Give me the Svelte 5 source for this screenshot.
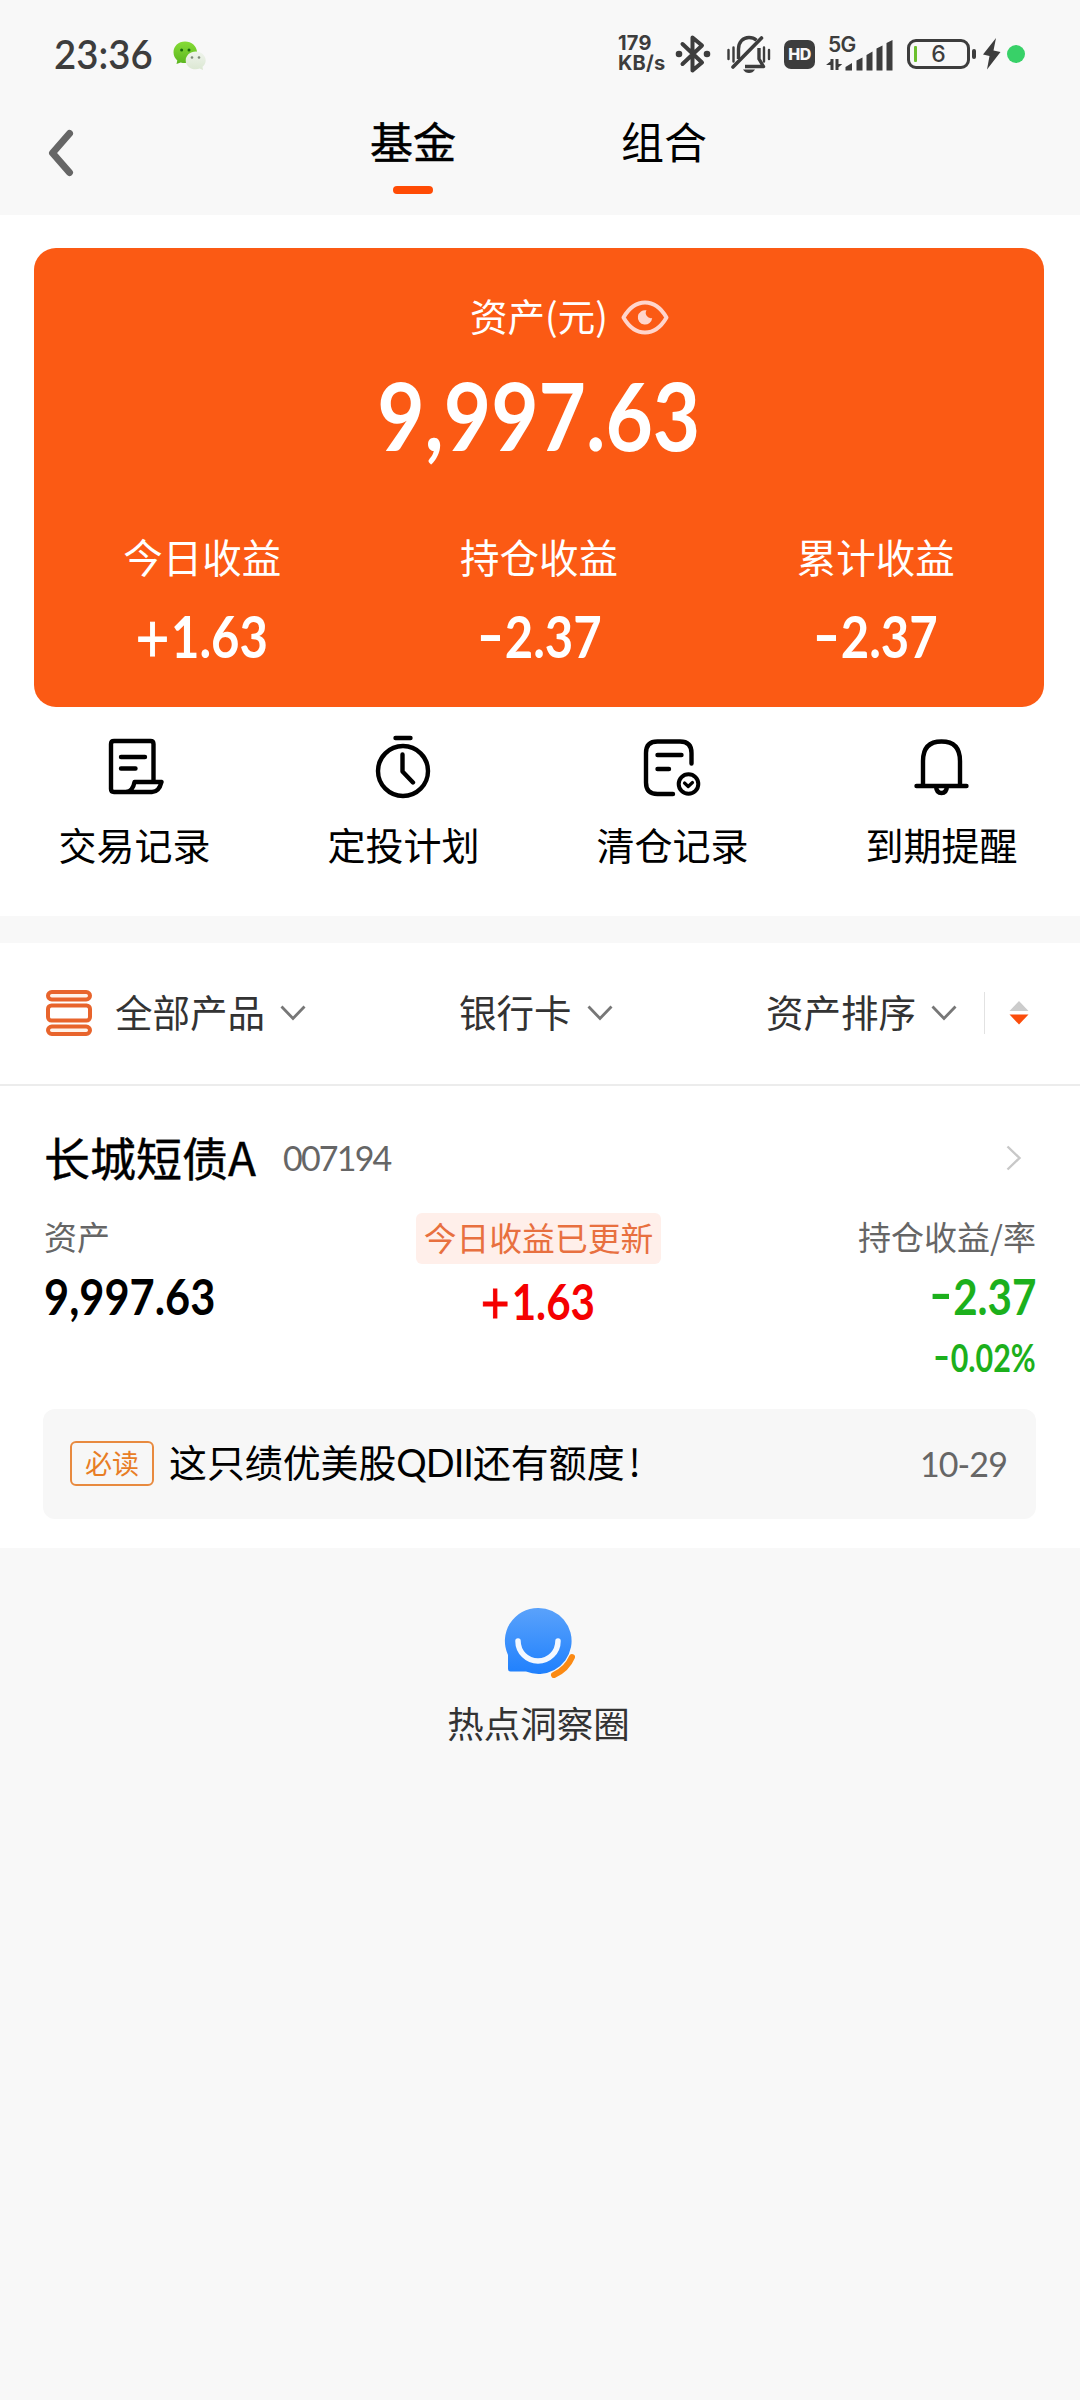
<script>
  const summary = [
    { label: '今日收益', value: '+1.63' },
    { label: '持仓收益', value: '-2.37' },
    { label: '累计收益', value: '-2.37' },
  ];
  const shortcuts = [
    { label: '交易记录', icon: 'record' },
    { label: '定投计划', icon: 'timer' },
    { label: '清仓记录', icon: 'cleared' },
    { label: '到期提醒', icon: 'bell' },
  ];
</script>

{#snippet amount(value)}
  {#if /^[+-]/.test(value)}<i class={value[0] === '+' ? 'plus' : 'minus'}>{value[0]}</i>{value.slice(1)}{:else}{value}{/if}
{/snippet}

{#snippet chevron()}
  <svg class="chevron" width="26" height="16" viewBox="0 0 26 16"><path d="M1.5 1.5L13 13.5L24.5 1.5" fill="none" stroke="#777" stroke-width="2.8" /></svg>
{/snippet}

<div class="page">
  <header>
    <div class="status">
      <span class="clock">23:36</span>
      <svg class="wechat" width="34" height="30" viewBox="0 0 34 30">
        <defs>
          <linearGradient id="wg" x1="0" y1="0" x2="0" y2="1"><stop offset="0" stop-color="#86dc36" /><stop offset="1" stop-color="#5bb51f" /></linearGradient>
          <linearGradient id="ww" x1="0" y1="0" x2="0" y2="1"><stop offset="0" stop-color="#eff4ec" /><stop offset="1" stop-color="#dbe7d2" /></linearGradient>
        </defs>
        <path d="M12 .5C5.500.5.5 5.200.5 11.300c0 3.500 1.600 6.300 3.800 8.100l-.8 3.600 4.200-1.600c1.300.5 2.800.7 4.300.7 6.600 0 12-4.700 12-10.800S18.600.5 12 .5z" fill="url(#wg)" />
        <circle cx="8.600" cy="9" r="1.500" fill="#17690a" /><circle cx="16" cy="9" r="1.500" fill="#17690a" />
        <path d="M22.700 10.500c-5.500 0-10 3.900-10 8.900s4.500 8.900 10 8.900c1.500 0 2.800-.3 4-.8l3.300 1.500-.5-3.200c2-1.600 3.200-3.900 3.200-6.400 0-5-4.500-8.900-10-8.900z" fill="url(#ww)" />
        <circle cx="19" cy="16.500" r="1.300" fill="#7d8a78" /><circle cx="26" cy="16.500" r="1.300" fill="#7d8a78" />
      </svg>
      <div class="speed"><span>179</span><span>KB/s</span></div>
      <svg class="bt" width="36" height="40" viewBox="0 0 36 40" fill="none" stroke="#3d3d3d" stroke-width="4" stroke-linejoin="round" stroke-linecap="round"><path d="M7.500 10L27 28.500L17.500 36.500V3.500L27 11.500L7.500 30" /><path d="M1 20l3-3 3 3-3 3zM29 20l3-3 3 3-3 3z" fill="#3d3d3d" stroke="none" /><circle cx="4" cy="20" r="1.300" /><circle cx="32" cy="20" r="1.300" /></svg>
      <svg class="mute" width="46" height="40" viewBox="0 0 46 40" fill="none" stroke="#3d3d3d" stroke-width="3.400">
        <path d="M2.500 16v9M7.500 13.500v14M38 13.500v14M43 16v9" stroke-width="2.400" stroke-linecap="round" />
        <path d="M12.500 25V15C12.500 8 17 3.500 23 3.500c3 0 5.500 1 7.500 2.800M33 14v11l4.500 7.500H19" stroke-linejoin="round" />
        <path d="M35.500 4L7 33" stroke-linecap="round" stroke-width="3.600" />
        <path d="M17 35.500h12c-1.500 2.500-3.500 3.500-6 3.500s-4.500-1-6-3.500z" fill="#3d3d3d" stroke="none" />
      </svg>
      <span class="hd">HD</span>
      <div class="cell">
        <span>5G</span>
        <svg width="68" height="34" viewBox="0 0 68 34" fill="#3d3d3d"><path d="M4.500 22h3v11h-3zM0 28l6.800-5.500v5.500zM9.500 22h3v11h-3zM10 32.500v-5.500h6.300zM19.500 30l6.500-4v7.500h-6.500zM30.500 23.500l6-3V33.500h-6zM40.500 18l6-3.500v19h-6zM50.500 11.500l6-3v25h-6zM60.500 6l6-3v30.500h-6z" /></svg>
      </div>
      <div class="battery"><i></i><span>6</span></div>
      <svg class="bolt" width="19" height="32" viewBox="0 0 19 32"><path d="M14 0L1 16.500l6.500 1.500L5 31.500 18.500 14l-7-1.500z" fill="#3d3d3d" /></svg>
      <i class="dot"></i>
    </div>
    <nav>
      <svg class="back" width="26" height="48" viewBox="0 0 26 48"><path d="M21.500 4.500L4.500 24L21.500 43.500" fill="none" stroke="#666" stroke-width="7" stroke-linecap="round" stroke-linejoin="round" /></svg>
      <span class="tab active">基金</span>
      <span class="tab">组合</span>
    </nav>
  </header>

  <section class="top">
    <div class="card">
      <div class="caption">
        <span>资产(元)</span>
        <svg width="48" height="35" viewBox="0 0 48 35" fill="none" stroke="#ffd5cc" stroke-width="4" stroke-linejoin="round"><path d="M2.500 17.500C8 8 15 2.500 24 2.500S40 8 45.500 17.500C40 27 33 32.500 24 32.500S8 27 2.500 17.500z" /><path d="M25.500 10.300A7.200 7.200 0 1 0 31.200 18a5.200 5.200 0 0 1-5.700-7.700z" fill="#ffd5cc" stroke="none" /></svg>
      </div>
      <div class="total"><span class="num">9,997.63</span></div>
      <div class="summary">
        {#each summary as s}
          <div><span class="label">{s.label}</span><span class="num">{@render amount(s.value)}</span></div>
        {/each}
      </div>
    </div>

    <div class="shortcuts">
      {#each shortcuts as s}
        <div>
          <svg width="64" height="68" viewBox="0 0 64 68" fill="none" stroke="#000" stroke-width="4.400" stroke-linecap="round" stroke-linejoin="round">
            {#if s.icon === 'record'}
              <path d="M50.500 47V10q0-3-3-3H11q-3 0-3 3V55q0 3 3 3H49q7 0 9.500-10H31.500Q30 57 23 58" />
              <path d="M18 23H42M18 34.500H32.500" />
            {:else if s.icon === 'timer'}
              <circle cx="31" cy="37" r="25" /><path d="M23.500 4H38.500M30.500 20.500V37.500L41 48.500" />
            {:else if s.icon === 'cleared'}
              <path d="M32 60H16.500Q5 60 5 48.500V19Q5 7.500 16.500 7.500H39Q50.500 7.500 50.500 19V29.500M16.500 21H40.500M16.500 35H28" />
              <circle cx="47.500" cy="50" r="9.800" stroke-width="4" /><path d="M43.500 49L47.200 52.500L51.500 48.500" stroke-width="3.200" />
            {:else}
              <path d="M13 51.500V27Q13 7.500 31.500 7.500T50 27V51.500M6.500 52H56.500M26 52.500Q26.500 59 31.500 59T37 52.500" />
            {/if}
          </svg>
          <span>{s.label}</span>
        </div>
      {/each}
    </div>
  </section>

  <section class="filters">
    <svg class="stack" width="46" height="46" viewBox="0 0 46 46" fill="#fff3ea" stroke="#e8642c" stroke-width="4"><rect x="2" y="2" width="42" height="7.500" rx="3.800" /><rect x="2" y="15.500" width="42" height="15" rx="3.500" fill="#fff" /><rect x="2" y="36.500" width="42" height="7.500" rx="3.800" /></svg>
    <span class="all">全部产品</span>{@render chevron()}
    <span class="bank">银行卡</span>{@render chevron()}
    <span class="sort">资产排序</span>{@render chevron()}
    <i class="rule"></i>
    <svg class="updown" width="20" height="24" viewBox="0 0 20 24"><path d="M10 0l9.500 10H.5z" fill="#ccc" /><path d="M.5 13.500h19L10 23.500z" fill="#fb4d0c" /></svg>
  </section>

  <section class="fund">
    <div class="title">
      <h2>长城短债A</h2><span class="code">007194</span>
      <svg width="16" height="26" viewBox="0 0 16 26"><path d="M1.500 1.500L13.500 13L1.500 24.500" fill="none" stroke="#c8c8c8" stroke-width="2.400" /></svg>
    </div>
    <div class="figures">
      <div class="left"><span class="label">资产</span><span class="num">9,997.63</span></div>
      <div class="mid"><span class="tag">今日收益已更新</span><span class="num">{@render amount('+1.63')}</span></div>
      <div class="right"><span class="label">持仓收益/率</span><span class="num">{@render amount('-2.37')}</span><span class="num rate">{@render amount('-0.02%')}</span></div>
    </div>
    <div class="notice">
      <span class="must">必读</span><span class="headline">这只绩优美股<b>QDII</b>还有额度<em>!</em></span><span class="date">10-29</span>
    </div>
  </section>

  <footer>
    <svg width="72" height="72" viewBox="0 0 72 72">
      <defs><linearGradient id="chat" x1="0" y1="0" x2="0" y2="1"><stop offset="0" stop-color="#5aa2fb" /><stop offset="1" stop-color="#1f80fd" /></linearGradient></defs>
      <path d="M35 2a33 33 0 1 1-12 63.500H7.500Q5 65.500 5 63V49A33 33 0 0 1 35 2z" fill="url(#chat)" />
      <path d="M15 35a20 20 0 0 0 40 0" fill="none" stroke="#f3f8ff" stroke-width="5.500" stroke-linecap="round" />
      <path d="M69 51Q64 63 51 69" fill="none" stroke="#fb8a14" stroke-width="6" stroke-linecap="round" />
    </svg>
    <span>热点洞察圈</span>
  </footer>
</div>

<style>
  :global(body) { background: #f8f8f8; }
  .page {
    width: 1080px;
    height: 2400px;
    background: #f8f8f8;
    color: #000;
    font-family: "Noto Sans CJK SC", sans-serif;
    font-size: 38px;
    line-height: 1;
  }
  svg { display: block; flex: none; }
  i, em { font-style: normal; }
  span, h2 { white-space: nowrap; }
  .num { display: inline-block; font-family: Lato, sans-serif; font-weight: 700; transform: scaleX(.86); }
  .plus { display: inline-block; font-weight: 400; -webkit-text-stroke: .8px currentColor; transform: scale(1.18); margin: 0 .09em 0 .03em; }
  .minus { display: inline-block; transform: translateY(-.06em) scaleX(1.5); margin: 0 .11em 0 .08em; }

  header { height: 215px; }
  .status { height: 108px; display: flex; align-items: center; color: #3d3d3d; font-family: Lato, sans-serif; font-weight: 700; }
  .clock { width: 98px; margin-left: 54px; margin-top: -2px; font-size: 41px; font-weight: 600; transform: scaleX(.935); transform-origin: left; }
  .wechat { margin-left: 21px; margin-top: 3px; }
  .speed { margin-left: 411px; margin-top: -1px; width: 48px; display: flex; flex-direction: column; gap: 1px; font: 700 20px/19px Inter, sans-serif; letter-spacing: .2px; }
  .bt { margin-left: 9px; }
  .mute { margin-left: 15px; }
  .hd { margin-left: 12px; width: 31px; height: 29px; border-radius: 7px; background: #3d3d3d; color: #f8f8f8; font: 800 16px/29px Inter, sans-serif; text-align: center; letter-spacing: -.5px; }
  .cell { position: relative; margin-left: 11px; width: 68px; height: 34px; }
  .cell span { position: absolute; left: 2px; top: -5px; font: 600 21px/26px Inter, sans-serif; letter-spacing: -.6px; }
  .battery { position: relative; box-sizing: border-box; margin-left: 13px; width: 63px; height: 30px; border: 3px solid #3d3d3d; border-radius: 9px; text-align: center; font: 500 23px/24px Inter, sans-serif; }
  .battery::after { content: ""; position: absolute; right: -9px; top: 7px; width: 4px; height: 10px; border-radius: 2px; background: #3d3d3d; }
  .battery i { position: absolute; left: 4px; top: 4px; width: 3px; height: 16px; border-radius: 1px; background: #6cc02e; }
  .bolt { margin-left: 12px; }
  .dot { margin-left: 6px; width: 18px; height: 18px; border-radius: 50%; background: #38d168; }

  nav { display: flex; height: 107px; }
  .back { margin: 21px 0 0 48px; }
  .tab { width: 84px; height: 92px; box-sizing: border-box; padding-top: 11px; margin-left: 166px; font-size: 43px; }
  .back + .tab { margin-left: 297px; }
  .active { padding-bottom: 6px; -webkit-text-stroke: .5px #000; display: flex; flex-direction: column; align-items: center; justify-content: space-between; }
  .active::after { content: ""; width: 40px; height: 8px; border-radius: 4px; background: #ff4b05; }

  .top { height: 701px; background: #fff; overflow: hidden; }
  .card { margin: 33px 0 0 34px; width: 1010px; height: 459px; border-radius: 22px; background: #fb5a14; color: #fff; overflow: hidden; }
  .caption { display: flex; align-items: center; height: 38px; margin: 50px 0 0 436px; }
  .caption span { width: 151px; font-size: 37.500px; margin-top: -4px; }
  .total { height: 95px; margin-top: 27px; text-align: center; font-size: 94px; }
  .total .num { transform: scaleX(.87); }
  .summary { display: grid; grid-template-columns: repeat(3, 1fr); margin-top: 78px; }
  .summary div { display: flex; flex-direction: column; align-items: center; }
  .summary .label { font-size: 39.500px; }
  .summary .num { margin-top: 32px; font-size: 57px; }

  .shortcuts { display: grid; grid-template-columns: repeat(4, 269px); margin-top: 27px; }
  .shortcuts div { display: flex; flex-direction: column; align-items: center; }
  .shortcuts span { margin-top: 23px; font-size: 38px; }

  .filters { display: flex; align-items: center; height: 143px; box-sizing: border-box; margin-top: 27px; padding: 0 0 2px 46px; background: #fff; border-bottom: 2px solid #ececec; color: #333; font-size: 37.500px; }
  .filters span { margin-top: -3px; }
  .all { width: 165px; margin-left: 23px; }
  .bank { width: 128px; margin-left: 153px; }
  .sort { width: 165px; margin-left: 153px; }
  .rule { width: 1px; height: 42px; margin-left: 27px; background: #e2e2e2; }
  .updown { margin-left: 24px; }

  .fund { height: 462px; padding: 0 44px; box-sizing: border-box; background: #fff; overflow: hidden; }
  .title { display: flex; align-items: center; margin-top: 49px; height: 46px; }
  h2 { margin: -5px 0 0; font-size: 46px; font-weight: 400; -webkit-text-stroke: .4px #000; width: 239px; }
  .code { font: 400 34px/46px Lato, sans-serif; color: #666; width: 110px; letter-spacing: -1.800px; }
  .title svg { margin-left: auto; margin-right: 14px; }
  .figures { display: grid; grid-template-columns: 372px 245px 1fr; margin-top: 32px; height: 196px; }
  .figures div { display: flex; flex-direction: column; }
  .label { font-size: 33px; }
  .figures .label { color: #666; margin-top: 7px; }
  .figures .num { font-size: 49px; }
  .left .num { transform: scaleX(.885); transform-origin: left; margin-top: 19px; }
  .mid { align-items: center; }
  .tag { box-sizing: border-box; width: 245px; height: 51px; border-radius: 6px; background: #ffefea; color: #e8703f; font-size: 32.800px; line-height: 48px; text-align: center; }
  .mid .num { color: #f50000; margin-top: 13px; }
  .right { align-items: flex-end; }
  .right .num { color: #1cb01c; transform-origin: right; margin-top: 19px; }
  .figures .right .rate { font-size: 38px; margin-top: 17px; transform: scaleX(.8); }
  .notice { display: flex; align-items: center; height: 110px; margin: 0 0 0 -1px; padding: 0 29px 0 27px; border-radius: 12px; background: #f7f7f7; }
  .must { box-sizing: border-box; width: 84px; height: 45px; margin-top: -2px; border: 2px solid #e88a3f; border-radius: 6px; color: #e87d25; text-align: center; font-size: 27px; line-height: 39px; }
  .headline { margin-left: 15px; margin-top: -6px; font-size: 37.900px; }
  .headline b { font: 400 38px/38px Lato, sans-serif; letter-spacing: -1px; }
  .headline em { margin-left: 4px; }
  .date { margin-left: auto; color: #666; font: 400 34px/46px Lato, sans-serif; letter-spacing: -.9px; }

  footer { display: flex; flex-direction: column; align-items: center; padding: 58px 3px 0 0; color: #333; }
  footer span { margin-top: 27px; font-size: 36.500px; }
</style>
